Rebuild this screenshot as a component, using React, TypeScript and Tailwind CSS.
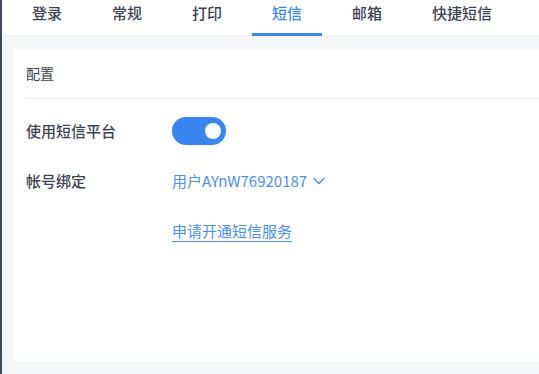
import React from "react";

const tabs = ["登录", "常规", "打印", "短信", "邮箱", "快捷短信"];

export default function App() {
  const active = "短信";

  return (
    <div
      className="flex h-[374px] w-[539px] overflow-hidden bg-[#f5f6f8]"
      style={{ fontFamily: '"Noto Sans CJK SC", "Noto Sans", sans-serif' }}
    >
      {/* left window edge */}
      <div className="w-[2px] shrink-0 bg-[#3c4a60]" />

      <div className="flex min-w-0 flex-1 flex-col">
        {/* ── Tab bar ── */}
        <div className="flex h-[36px] shrink-0 gap-[10px] border-b border-[#eceef2] bg-white pl-[10px]">
          {tabs.map((t) => (
            <div
              key={t}
              className={`relative h-full px-5 pt-[2px] text-[15px] leading-[22px] font-medium whitespace-nowrap ${
                t === active ? "text-[#3a86f0]" : "text-[#3d4350]"
              }`}
            >
              {t}
              {t === active && (
                <div className="absolute right-0 bottom-[-1px] left-0 h-[3px] bg-[#3a86f0]" />
              )}
            </div>
          ))}
        </div>

        {/* ── Content ── */}
        <div className="flex-1 py-[13px] pl-[12px]">
          <div className="flex h-full flex-col bg-white pl-[12px]">
            <div className="flex h-[50px] items-center border-b border-[#e8eaee] text-[14px] text-[#3d4350]">
              配置
            </div>

            <div className="flex flex-col pt-[7px]">
              <div className="flex h-[50px] items-center">
                <div className="w-[146px] text-[15px] font-medium text-[#3d4350]">使用短信平台</div>
                <div className="flex h-[28px] w-[54px] items-center justify-end rounded-full bg-[#3a86f0] pr-[5px]">
                  <div className="h-[16px] w-[16px] rounded-full bg-white" />
                </div>
              </div>

              <div className="flex h-[50px] items-center">
                <div className="w-[146px] text-[15px] font-medium text-[#3d4350]">帐号绑定</div>
                <div className="flex items-center gap-[6px] text-[15px] text-[#4a8ef2]">
                  用户AYnW76920187
                  <svg width="12" height="8" viewBox="0 0 12 8" fill="none">
                    <path d="M1 1.5 6 6.5 11 1.5" stroke="#4a8ef2" strokeWidth="1.5" strokeLinecap="round" strokeLinejoin="round" />
                  </svg>
                </div>
              </div>

              <div className="flex h-[50px] items-center">
                <div className="w-[146px]" />
                <span className="border-b border-[#4a8ef2] text-[15px] leading-[20px] text-[#4a8ef2]">
                  申请开通短信服务
                </span>
              </div>
            </div>
          </div>
        </div>
      </div>
    </div>
  );
}
